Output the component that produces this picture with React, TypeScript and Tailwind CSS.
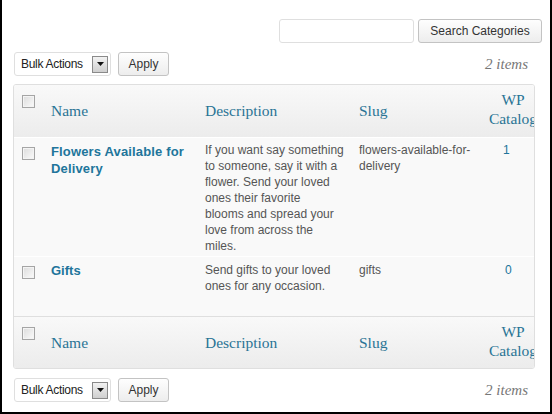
import React from "react";

const sans = { fontFamily: '"Liberation Sans", Arial, sans-serif' };

function Check() {
  return (
    <span className="block w-[13px] h-[13px] border border-[#a5a5a5] bg-gradient-to-br from-[#dcdcdc] to-[#fbfbfb] shadow-[inset_0_0_0_1px_#f4f4f4]" />
  );
}

function Btn({ children, w }: { children: React.ReactNode; w: string }) {
  return (
    <button
      className={`h-[24px] ${w} rounded-[3px] border border-[#c3c3c3] bg-gradient-to-b from-[#fefefe] to-[#ededed] text-[12px] text-[#333] flex items-center justify-center`}
    >
      {children}
    </button>
  );
}

function TableNav() {
  return (
    <div className="flex items-center justify-between h-[24px]">
      <div className="flex items-center gap-[7px]">
        <div className="w-[97px] h-[24px] rounded-[3px] border border-[#dfdfdf] bg-white flex items-center justify-between pl-[6px] pr-[2px]">
          <span className="text-[12px] text-[#222] tracking-[-0.3px]">Bulk Actions</span>
          <span className="w-[16px] h-[17px] border border-[#8a8a8a] bg-gradient-to-b from-[#f2f2f2] to-[#cfcfcf] flex items-center justify-center">
            <svg width="7" height="4" viewBox="0 0 7 4">
              <polygon points="0,0 7,0 3.5,4" fill="#111" />
            </svg>
          </span>
        </div>
        <Btn w="w-[51px]">Apply</Btn>
      </div>
      <span
        className="italic text-[15px] text-[#777] pr-[22px]"
        style={{ fontFamily: '"Liberation Serif", "Times New Roman", serif' }}
      >
        2 items
      </span>
    </div>
  );
}

function HeadRow() {
  const serif = { fontFamily: '"Liberation Serif", Georgia, serif' };
  return (
    <tr className="h-[52px] bg-gradient-to-b from-[#f9f9f9] to-[#ececec]" style={serif}>
      <th className="align-top pt-[10px] pl-[8px] font-normal">
        <Check />
      </th>
      <th className="align-middle text-left pl-[7px] font-normal text-[15.5px] text-[#2a7495]">Name</th>
      <th className="align-middle text-left pl-[7px] font-normal text-[15.5px] text-[#2a7495]">Description</th>
      <th className="align-middle text-left pl-[7px] font-normal text-[15.5px] text-[#2a7495]">Slug</th>
      <th className="align-middle text-center font-normal text-[15.5px] leading-[19px] text-[#2a7495] pr-[12px] pb-[3px]">
        WP
        <br />
        Catalog
      </th>
    </tr>
  );
}

export default function App() {
  return (
    <div
      className="w-[552px] h-[414px] bg-white border-l-2 border-r-2 border-b-2 border-black overflow-hidden"
      style={sans}
    >
      <div className="flex justify-end gap-[4px] pt-[19px] pr-[8px]">
        <div className="w-[135px] h-[24px] rounded-[3px] border border-[#dfdfdf] bg-white" />
        <Btn w="w-[124px]">Search Categories</Btn>
      </div>

      <div className="mt-[9px] pl-[12px]">
        <TableNav />
      </div>

      <div className="mt-[8px] ml-[11px] w-[522px] border border-[#dfdfdf] rounded-[3px] overflow-hidden">
        <table className="table-fixed w-[540px] border-collapse">
          <colgroup>
            <col className="w-[30px]" />
            <col className="w-[154px]" />
            <col className="w-[154px]" />
            <col className="w-[132px]" />
            <col className="w-[70px]" />
          </colgroup>
          <thead className="border-b border-[#dfdfdf]">
            <HeadRow />
          </thead>
          <tbody className="bg-[#f9f9f9] text-[12px] leading-[16px] text-[#555]">
            <tr className="h-[119px] border-b border-[#dfdfdf] align-top">
              <td className="pt-[9px] pl-[8px] border-t border-white">
                <Check />
              </td>
              <td className="pt-[5px] pl-[7px] border-t border-white">
                <span className="font-bold text-[13px] leading-[17px] text-[#21759b] tracking-[0.15px] whitespace-nowrap">
                  Flowers Available for
                  <br />
                  Delivery
                </span>
              </td>
              <td className="pt-[4px] pl-[7px] whitespace-nowrap border-t border-white">
                If you want say something
                <br />
                to someone, say it with a
                <br />
                flower. Send your loved
                <br />
                ones their favorite
                <br />
                blooms and spread your
                <br />
                love from across the
                <br />
                miles.
              </td>
              <td className="pt-[4px] pl-[7px] whitespace-nowrap border-t border-white">
                flowers-available-for-
                <br />
                delivery
              </td>
              <td className="pt-[4px] pl-[19px] text-[#21759b] border-t border-white">1</td>
            </tr>
            <tr className="h-[60px] border-b border-[#dfdfdf] align-top">
              <td className="pt-[9px] pl-[8px] border-t border-white">
                <Check />
              </td>
              <td className="pt-[5px] pl-[7px] border-t border-white">
                <span className="font-bold text-[13px] leading-[17px] text-[#21759b]">Gifts</span>
              </td>
              <td className="pt-[5px] pl-[7px] whitespace-nowrap border-t border-white">
                Send gifts to your loved
                <br />
                ones for any occasion.
              </td>
              <td className="pt-[5px] pl-[7px] border-t border-white">gifts</td>
              <td className="pt-[5px] pl-[21px] text-[#21759b] border-t border-white">0</td>
            </tr>
          </tbody>
          <tfoot>
            <HeadRow />
          </tfoot>
        </table>
      </div>

      <div className="mt-[9px] pl-[12px]">
        <TableNav />
      </div>
    </div>
  );
}
